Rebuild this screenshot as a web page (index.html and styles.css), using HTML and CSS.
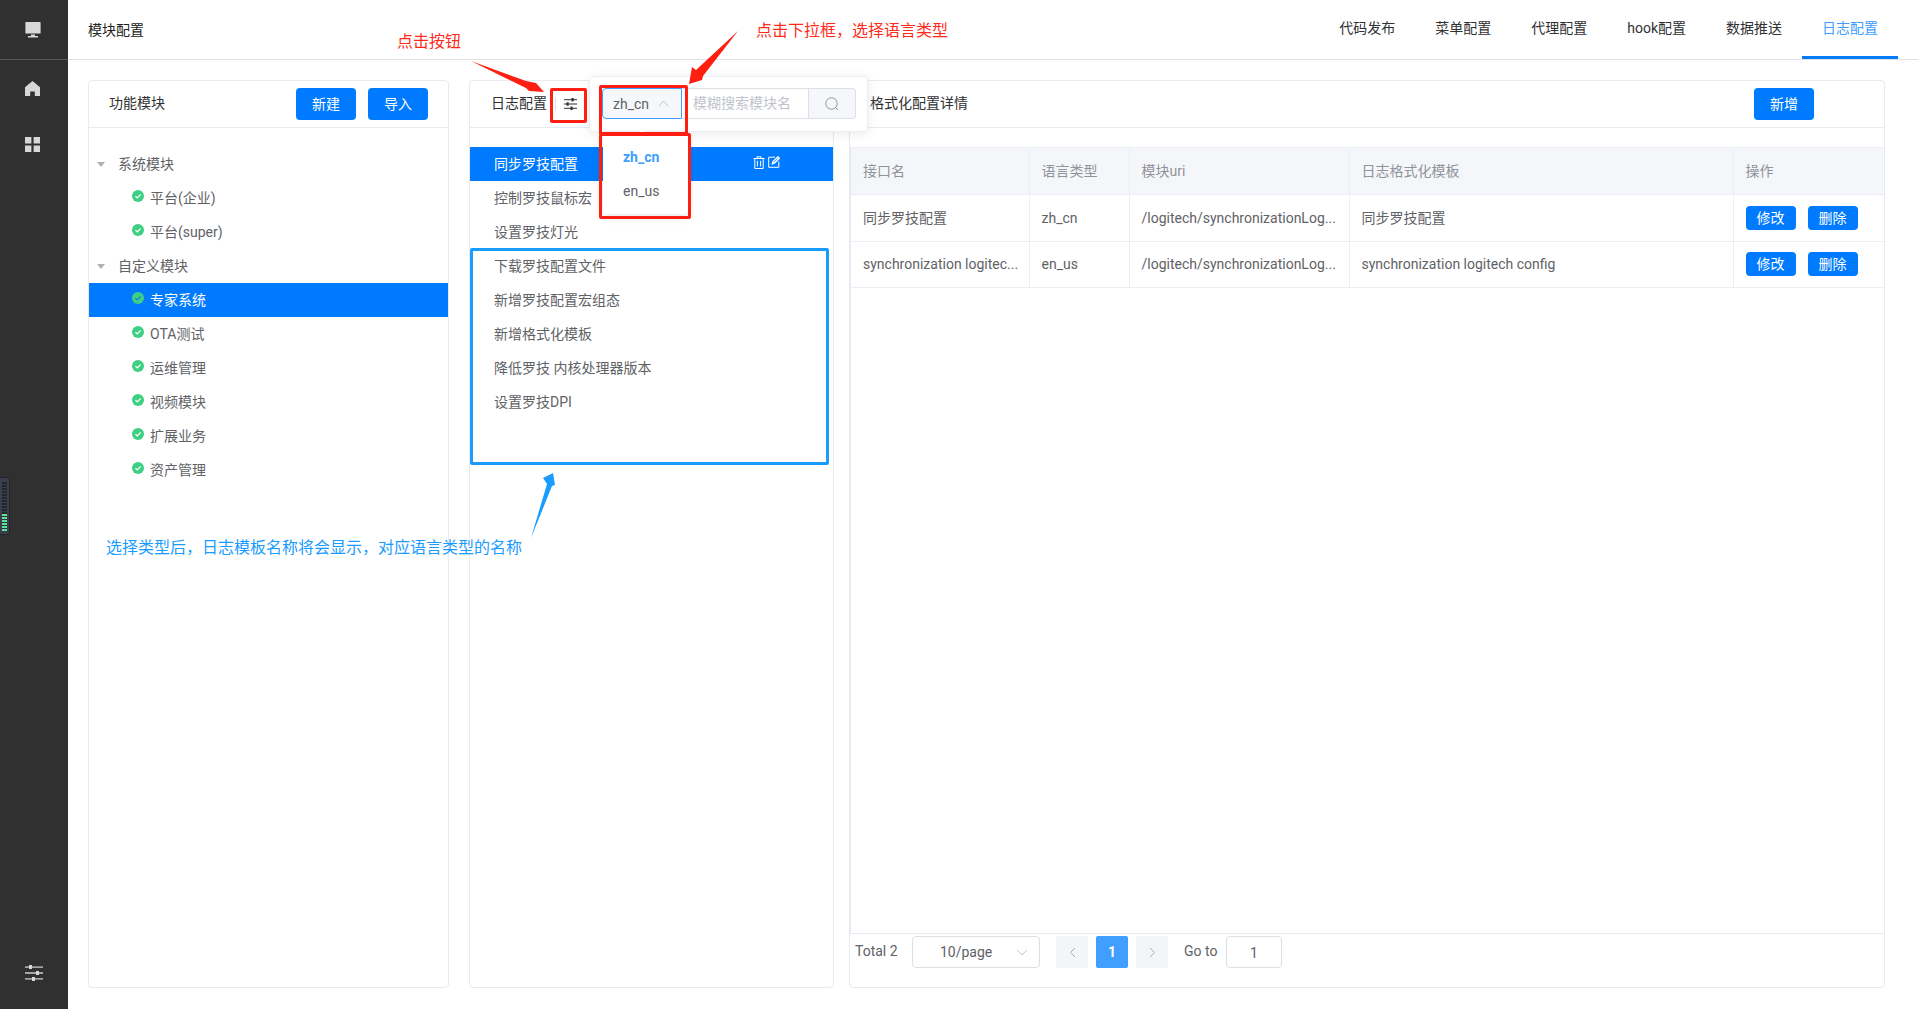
FILE: index.html
```html
<!DOCTYPE html>
<html lang="zh-CN">
<head>
<meta charset="utf-8">
<title>模块配置</title>
<link rel="stylesheet" href="styles.css">
</head>
<body>
<div class="app">
  <aside class="sidebar">
    <div class="side-top">
      <svg class="side-icon" width="16" height="16" viewBox="0 0 16 16"><path fill="#d8d8d8" d="M1 0h14a.6.6 0 0 1 .6.6V11a.6.6 0 0 1-.6.6H1a.6.6 0 0 1-.6-.6V.6A.6.6 0 0 1 1 0z"/><path fill="#d8d8d8" d="M6 12.4h4v1.6h3v1.4H3V14h3z"/></svg>
    </div>
    <nav class="side-nav">
      <div class="side-item">
        <svg width="15" height="15" viewBox="0 0 15 15"><path fill="#d8d8d8" d="M7.5 0 15 6.2V15H9.8v-4.6H5.2V15H0V6.2z"/></svg>
      </div>
      <div class="side-item">
        <svg width="15" height="15" viewBox="0 0 15 15"><path fill="#d8d8d8" d="M0 0h6.4v6.4H0zM8.6 0H15v6.4H8.6zM0 8.6h6.4V15H0zM8.6 8.6H15V15H8.6z"/></svg>
      </div>
    </nav>
    <div class="side-bottom">
      <svg width="18" height="16" viewBox="0 0 18 16"><g fill="#d8d8d8"><rect y="1.5" width="18" height="1.2"/><rect y="7.3" width="18" height="1.4"/><rect y="13.3" width="18" height="1.2"/><rect x="4" y="0" width="3" height="4"/><rect x="11" y="6" width="3" height="4"/><rect x="7" y="12" width="3" height="4"/></g></svg>
    </div>
  </aside>

  <div class="main">
    <header class="topbar">
      <div class="page-title">模块配置</div>
      <nav class="tabs">
        <a class="tab">代码发布</a>
        <a class="tab">菜单配置</a>
        <a class="tab">代理配置</a>
        <a class="tab">hook配置</a>
        <a class="tab">数据推送</a>
        <a class="tab tab-active">日志配置</a>
      </nav>
    </header>

    <section class="content">
      <div class="panel panel-modules">
        <div class="panel-head">
          <span class="panel-title">功能模块</span>
          <div class="head-actions">
            <button class="btn">新建</button>
            <button class="btn">导入</button>
          </div>
        </div>
        <ul class="tree">
          <li class="tree-group"><i class="caret"></i>系统模块</li>
          <li class="tree-leaf"><svg class="ok" viewBox="0 0 12 12"><circle cx="6" cy="6" r="6"/><path class="ok-check" d="M3.4 6.1 5.3 7.8 8.6 4.5"/></svg>平台(企业)</li>
          <li class="tree-leaf"><svg class="ok" viewBox="0 0 12 12"><circle cx="6" cy="6" r="6"/><path class="ok-check" d="M3.4 6.1 5.3 7.8 8.6 4.5"/></svg>平台(super)</li>
          <li class="tree-group"><i class="caret"></i>自定义模块</li>
          <li class="tree-leaf is-selected"><svg class="ok" viewBox="0 0 12 12"><circle cx="6" cy="6" r="6"/><path class="ok-check" d="M3.4 6.1 5.3 7.8 8.6 4.5"/></svg>专家系统</li>
          <li class="tree-leaf"><svg class="ok" viewBox="0 0 12 12"><circle cx="6" cy="6" r="6"/><path class="ok-check" d="M3.4 6.1 5.3 7.8 8.6 4.5"/></svg>OTA测试</li>
          <li class="tree-leaf"><svg class="ok" viewBox="0 0 12 12"><circle cx="6" cy="6" r="6"/><path class="ok-check" d="M3.4 6.1 5.3 7.8 8.6 4.5"/></svg>运维管理</li>
          <li class="tree-leaf"><svg class="ok" viewBox="0 0 12 12"><circle cx="6" cy="6" r="6"/><path class="ok-check" d="M3.4 6.1 5.3 7.8 8.6 4.5"/></svg>视频模块</li>
          <li class="tree-leaf"><svg class="ok" viewBox="0 0 12 12"><circle cx="6" cy="6" r="6"/><path class="ok-check" d="M3.4 6.1 5.3 7.8 8.6 4.5"/></svg>扩展业务</li>
          <li class="tree-leaf"><svg class="ok" viewBox="0 0 12 12"><circle cx="6" cy="6" r="6"/><path class="ok-check" d="M3.4 6.1 5.3 7.8 8.6 4.5"/></svg>资产管理</li>
        </ul>
      </div>

      <div class="panel panel-logs">
        <div class="panel-head panel-head-start">
          <span class="panel-title">日志配置</span>
          <i class="head-sep"></i>
          <svg class="filter-icon" width="13" height="12" viewBox="0 0 13 12"><g fill="#303133"><rect y="1.2" width="13" height="1"/><rect y="5.5" width="13" height="1"/><rect y="9.8" width="13" height="1"/><rect x="7.5" y="0" width="2.2" height="3.4"/><rect x="2.5" y="4.3" width="2.2" height="3.4"/><rect x="6.5" y="8.6" width="2.2" height="3.4"/></g></svg>
        </div>
        <ul class="log-list">
          <li class="log-item log-selected">
            <span>同步罗技配置</span>
            <span class="log-actions">
              <svg width="12" height="13" viewBox="0 0 12 13" fill="none" stroke="#fff" stroke-width="1"><path d="M.5 2.5h11M4 2.5V.8h4v1.7M1.8 2.5v10h8.4v-10M4.4 4.8v5.6M7.6 4.8v5.6"/></svg>
              <svg width="12" height="12" viewBox="0 0 12 12" fill="none" stroke="#fff" stroke-width="1"><path d="M7 1.2H.7v10.1h10.1V5.4"/><path stroke-width="1.4" d="M4.4 7.7 5 5.6 9.9.9l1.3 1.3-4.8 4.9z"/></svg>
            </span>
          </li>
          <li class="log-item">控制罗技鼠标宏</li>
          <li class="log-item">设置罗技灯光</li>
          <li class="log-item">下载罗技配置文件</li>
          <li class="log-item">新增罗技配置宏组态</li>
          <li class="log-item">新增格式化模板</li>
          <li class="log-item">降低罗技 内核处理器版本</li>
          <li class="log-item">设置罗技DPI</li>
        </ul>
      </div>

      <div class="panel panel-detail">
        <div class="panel-head panel-head-detail">
          <span class="panel-title">格式化配置详情</span>
          <button class="btn">新增</button>
        </div>
        <div class="detail-body">
          <div class="table-wrap">
            <table class="table">
              <colgroup>
                <col class="col-name"><col class="col-lang"><col class="col-uri"><col class="col-tpl"><col>
              </colgroup>
              <thead>
                <tr><th>接口名</th><th>语言类型</th><th>模块uri</th><th>日志格式化模板</th><th>操作</th></tr>
              </thead>
              <tbody>
                <tr>
                  <td>同步罗技配置</td><td>zh_cn</td><td>/logitech/synchronizationLog...</td><td>同步罗技配置</td>
                  <td class="ops"><button class="btn btn-sm">修改</button><button class="btn btn-sm">删除</button></td>
                </tr>
                <tr>
                  <td>synchronization logitec...</td><td>en_us</td><td>/logitech/synchronizationLog...</td><td>synchronization logitech config</td>
                  <td class="ops"><button class="btn btn-sm">修改</button><button class="btn btn-sm">删除</button></td>
                </tr>
              </tbody>
            </table>
          </div>
          <footer class="pager">
            <span class="pager-total">Total 2</span>
            <div class="pager-size">
              <span>10/page</span>
              <svg width="12" height="7" viewBox="0 0 12 7" fill="none" stroke="#c0c4cc" stroke-width="1"><path d="M1 1l5 5 5-5"/></svg>
            </div>
            <div class="pager-nums">
              <span class="page-btn"><svg width="7" height="11" viewBox="0 0 7 11" fill="none" stroke="#a8abb2" stroke-width="1"><path d="M6 1 1.5 5.5 6 10"/></svg></span>
              <span class="page-btn page-current">1</span>
              <span class="page-btn"><svg width="7" height="11" viewBox="0 0 7 11" fill="none" stroke="#a8abb2" stroke-width="1"><path d="M1 1l4.500 4.500L1 10"/></svg></span>
            </div>
            <span class="pager-goto">Go to</span>
            <div class="pager-input">1</div>
          </footer>
        </div>
      </div>
    </section>
  </div>
</div>

<div class="meter">
  <div class="meter-dark"></div>
  <div class="meter-green"></div>
</div>

<div class="popover">
  <div class="lang-select">
    <span>zh_cn</span>
    <svg width="11" height="7" viewBox="0 0 11 7" fill="none" stroke="#c0c4cc" stroke-width="1"><path d="M.7 6.300 5.500 1l4.800 5.300"/></svg>
  </div>
  <div class="search-input">模糊搜索模块名</div>
  <div class="search-append">
    <svg width="14" height="14" viewBox="0 0 14 14" fill="none" stroke="#909399" stroke-width="1"><circle cx="6.500" cy="6.500" r="5.700"/><path d="M10.600 10.600 13 13"/></svg>
  </div>
</div>

<div class="dropdown">
  <i class="dropdown-arrow"></i>
  <div class="dropdown-item dropdown-active">zh_cn</div>
  <div class="dropdown-item">en_us</div>
</div>

<svg class="arrows" width="1918" height="1009" viewBox="0 0 1918 1009">
  <polygon fill="#ff1f12" points="471,61 526,81 536,83 544,92 529,91 526,88"/>
  <polygon fill="#ff1f12" points="738,31 703,76 702,80 689,84 692,67 696,70"/>
  <polygon fill="#1a9cff" points="531,538 547,484 543,478 553,473 555,485 552,486"/>
</svg>
<div class="mark mark-btn"></div>
<div class="mark mark-select"></div>
<div class="mark mark-drop"></div>
<div class="mark mark-list"></div>
<div class="note note-btn">点击按钮</div>
<div class="note note-select">点击下拉框，选择语言类型</div>
<div class="note note-list">选择类型后，日志模板名称将会显示，对应语言类型的名称</div>
</body>
</html>
```
FILE: styles.css
```css
* { box-sizing: border-box; }
html, body { margin: 0; height: 100%; overflow: hidden; }
body {
  font-family: Roboto, "Noto Sans CJK SC", sans-serif;
  font-size: 14px;
  line-height: 20px;
  color: #606266;
  background: #fff;
}
ul { list-style: none; margin: 0; padding: 0; }
.app { display: flex; height: 1009px; }

/* sidebar */
.sidebar { width: 68px; flex: none; background: #303030; display: flex; flex-direction: column; }
.side-top { height: 60px; border-bottom: 1px solid #5a5a5a; display: flex; align-items: center; justify-content: center; padding: 0 3px 0 0; }
.side-top svg { margin-top: 1px; margin-left: 1px; }
.side-item { height: 56px; display: flex; align-items: center; justify-content: center; padding-right: 4px; }
.side-bottom { margin-top: auto; height: 44px; display: flex; justify-content: center; align-items: flex-start; }

/* main */
.main { flex: 1; min-width: 0; display: flex; flex-direction: column; }
.topbar { height: 60px; border-bottom: 1px solid #e0e0e0; display: flex; justify-content: space-between; padding: 0 20px; flex: none; }
.page-title { color: #222; line-height: 60px; }
.tabs { display: flex; height: 59px; }
.tab { padding: 18px 20px 0; color: #303133; border-bottom: 3px solid transparent; height: 59px; line-height: 20px; }
.tab-active { color: #409eff; border-bottom-color: #007bff; }

.content { flex: 1; display: flex; padding: 20px 33px 21px 20px; min-height: 0; }
.panel { border: 1px solid #e8e9f1; border-radius: 4px; background: #fff; display: flex; flex-direction: column; }
.panel-modules { width: 361px; flex: none; }
.panel-logs { width: 365px; flex: none; margin-left: 20px; }
.panel-detail { flex: 1; min-width: 0; margin-left: 15px; }
.panel-head { height: 47px; flex: none; border-bottom: 1px solid #e8e9f1; display: flex; align-items: center; justify-content: space-between; padding: 0 20px; }
.panel-head-start { justify-content: flex-start; padding-left: 21px; }
.panel-head-detail { padding-right: 70px; }
.panel-title { color: #303133; margin-top: -2px; }
.head-actions { display: flex; gap: 12px; }
.head-sep { width: 1px; height: 14px; background: #dcdfe6; margin: 0 8px 0 8px; }
.filter-icon { display: block; }

.btn { width: 60px; height: 32px; border: 0; border-radius: 4px; background: #007bff; color: #fff; font: inherit; padding: 0; }
.btn-sm { width: 50px; height: 24px; font-size: 14px; line-height: 24px; }

/* tree */
.tree { padding-top: 19px; }
.tree-group, .tree-leaf { height: 34px; line-height: 34px; display: flex; align-items: center; color: #606266; }
.tree-group { padding-left: 8px; }
.caret { width: 0; height: 0; border-left: 4px solid transparent; border-right: 4px solid transparent; border-top: 5px solid #aeb1b8; margin-right: 13px; }
.tree-leaf { padding-left: 43px; }
.ok { width: 12px; height: 12px; margin-right: 6px; margin-top: -5px; flex: none; }
.ok circle { fill: #3fcf82; }
.ok-check { fill: none; stroke: #fff; stroke-width: 1.2; }
.is-selected { background: #007bff; color: #fff; }
.is-selected .ok-check { stroke: #1a7fd8; }

/* log list */
.log-list { padding-top: 19px; }
.log-item { height: 34px; line-height: 34px; padding-left: 24px; display: flex; align-items: center; justify-content: space-between; color: #606266; }
.log-selected { background: #007bff; color: #fff; padding-right: 53px; }
.log-actions { display: flex; gap: 3px; align-items: center; margin-top: -4px; }

/* detail */
.detail-body { flex: 1; min-height: 0; display: flex; flex-direction: column; padding-top: 19px; }
.table-wrap { flex: 1; min-height: 0; border-left: 1px solid #e8e9f1; }
.table { width: 100%; table-layout: fixed; border-collapse: collapse; }
.col-name { width: 178px; }
.col-lang { width: 100px; }
.col-uri { width: 220px; }
.col-tpl { width: 384px; }
.table th, .table td { height: 47px; border: 1px solid #ebeef5; padding: 0 12px; text-align: left; font-weight: 400; white-space: nowrap; }
.table tbody td { height: 46.500px; }
.table tr > :first-child { border-left: 0; }
.table tr > :last-child { border-right: 0; }
.table th { background: #f5f6fa; color: #909399; }
.table td { color: #606266; }
.ops .btn + .btn { margin-left: 12px; }

.pager { height: 54px; flex: none; border-top: 1px solid #e8e9f1; display: flex; align-items: flex-start; padding: 2px 0 0 5px; color: #606266; }
.pager-total { line-height: 32px; margin-right: 16px; width: 41px; white-space: nowrap; margin-top: -1px; }
.pager-size { width: 128px; height: 32px; border: 1px solid #dcdfe6; border-radius: 4px; display: flex; align-items: center; justify-content: space-between; padding: 0 11px 0 27px; }
.pager-nums { display: flex; gap: 8px; margin-left: 16px; }
.page-btn { width: 32px; height: 32px; border-radius: 2px; background: #f4f5f9; display: flex; align-items: center; justify-content: center; }
.page-current { background: #409eff; color: #fff; font-weight: 700; }
.pager-goto { line-height: 32px; margin-left: 16px; margin-top: -1px; white-space: nowrap; width: 42px; }
.pager-input { width: 56px; height: 32px; border: 1px solid #dcdfe6; border-radius: 4px; text-align: center; line-height: 32px; }

/* overlays */
.meter { position: absolute; left: 0; top: 477px; width: 10px; height: 58px; background: #3a3f4b; border: 1px solid #22252c; border-left: 0; border-radius: 0 3px 3px 0; }
.meter-dark { position: absolute; left: 2px; top: 4px; width: 5px; height: 32px; background: repeating-linear-gradient(#23262d 0 2px, #3a3f4b 2px 3px); }
.meter-green { position: absolute; left: 2px; top: 36px; width: 5px; height: 17px; background: repeating-linear-gradient(#5fe09a 0 2px, #2e333d 2px 3px); }

.popover { position: absolute; left: 589px; top: 76px; width: 279px; height: 56px; background: #fff; border: 1px solid #ebeef5; border-radius: 4px; box-shadow: 0 2px 12px rgba(0,0,0,.08); display: flex; padding: 11px 11px 0 12px; }
.lang-select { width: 80px; height: 31px; background: #f5f7fa; border: 1px solid #409eff; border-radius: 4px 0 0 4px; display: flex; align-items: center; justify-content: space-between; padding: 0 12px 0 10px; color: #606266; flex: none; }
.search-input { flex: 1; height: 31px; border: 1px solid #dcdfe6; border-left: 0; line-height: 29px; padding-left: 11px; color: #c0c4cc; white-space: nowrap; overflow: hidden; }
.search-append { width: 47px; height: 31px; background: #f5f7fa; border: 1px solid #dcdfe6; border-left: 0; border-radius: 0 4px 4px 0; display: flex; align-items: center; justify-content: center; flex: none; }

.dropdown { position: absolute; left: 603px; top: 135px; width: 85px; height: 79px; background: #fff; box-shadow: 0 2px 12px rgba(0,0,0,.12); border-radius: 4px; padding-top: 5px; }
.dropdown-arrow { position: absolute; left: 35px; top: -4px; width: 8px; height: 8px; background: #fff; transform: rotate(45deg); }
.dropdown-item { position: relative; height: 34px; line-height: 34px; padding-left: 20px; color: #606266; }
.dropdown-active { color: #409eff; font-weight: 700; }

.arrows { position: absolute; left: 0; top: 0; pointer-events: none; }
.mark { position: absolute; border: 3px solid #ff1f12; border-radius: 2px; pointer-events: none; }
.mark-btn { left: 550px; top: 88px; width: 37px; height: 35px; }
.mark-select { left: 599px; top: 85px; width: 89px; height: 50px; }
.mark-drop { left: 599px; top: 133px; width: 92px; height: 86px; }
.mark-list { left: 470px; top: 248px; width: 359px; height: 217px; border-color: #1a9cff; }
.note { position: absolute; font-size: 16px; line-height: 22px; white-space: nowrap; }
.note-btn { left: 397px; top: 31px; color: #ff2a1a; }
.note-select { left: 756px; top: 20px; color: #ff2a1a; }
.note-list { left: 106px; top: 537px; color: #1a9cff; }
```
